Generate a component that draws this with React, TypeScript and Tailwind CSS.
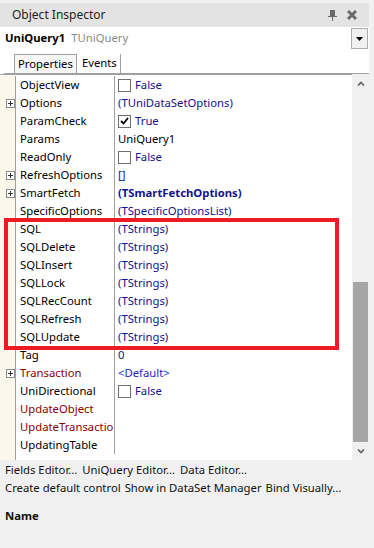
import React from 'react';

type Row = {
  name: string;
  value?: string;
  expand?: boolean;
  check?: boolean;
  checked?: boolean;
  red?: boolean;
  bold?: boolean;
  plain?: boolean;
  bright?: boolean;
};

const ROWS: Row[] = [
  { name: 'ObjectView', value: 'False', check: true },
  { name: 'Options', value: '(TUniDataSetOptions)', expand: true },
  { name: 'ParamCheck', value: 'True', check: true, checked: true },
  { name: 'Params', value: 'UniQuery1', plain: true },
  { name: 'ReadOnly', value: 'False', check: true },
  { name: 'RefreshOptions', value: '[]', expand: true },
  { name: 'SmartFetch', value: '(TSmartFetchOptions)', expand: true, bold: true },
  { name: 'SpecificOptions', value: '(TSpecificOptionsList)' },
  { name: 'SQL', value: '(TStrings)' },
  { name: 'SQLDelete', value: '(TStrings)' },
  { name: 'SQLInsert', value: '(TStrings)' },
  { name: 'SQLLock', value: '(TStrings)' },
  { name: 'SQLRecCount', value: '(TStrings)' },
  { name: 'SQLRefresh', value: '(TStrings)' },
  { name: 'SQLUpdate', value: '(TStrings)' },
  { name: 'Tag', value: '0' },
  { name: 'Transaction', value: '<Default>', expand: true, red: true, bright: true },
  { name: 'UniDirectional', value: 'False', check: true },
  { name: 'UpdateObject', red: true },
  { name: 'UpdateTransaction', red: true },
  { name: 'UpdatingTable' },
];

const PlusBox = () => (
  <div className="w-[9px] h-[9px] border border-[#8c8c8c] bg-white flex items-center justify-center">
    <svg width="5" height="5" viewBox="0 0 5 5">
      <path d="M0 2.5H5M2.5 0V5" stroke="#333" strokeWidth="1" />
    </svg>
  </div>
);

const CheckBox = ({ checked }: { checked?: boolean }) => (
  <div className="w-[13px] h-[13px] border border-[#707070] bg-white flex items-center justify-center mr-[4px]">
    {checked && (
      <svg width="9" height="8" viewBox="0 0 9 8">
        <path d="M1 4L3.5 6.5L8 1" stroke="#000" strokeWidth="1.8" fill="none" />
      </svg>
    )}
  </div>
);

const App: React.FC = () => {
  return (
    <div
      className="w-[374px] h-[548px] bg-[#f0f0f0] relative overflow-hidden text-[11.3px] text-black"
      style={{ fontFamily: '"Noto Sans", "Open Sans", sans-serif' }}
    >
      <div className="pt-[3px]">
        {/* title bar */}
        <div className="h-[24px] bg-[#e3e3e3] mr-[5px] flex items-center pl-[12px] pr-[12px]">
          <span className="flex-1 text-[#1e1e1e] text-[12px]">Object Inspector</span>
          <svg width="9" height="11" viewBox="0 0 9 11" className="mr-[10px]">
            <path d="M2 0H7V6H9V7H5V11H4V7H0V6H2Z" fill="#6a6a6a" />
          </svg>
          <svg width="10" height="10" viewBox="0 0 10 10">
            <path d="M1 1L9 9M9 1L1 9" stroke="#6a6a6a" strokeWidth="3" />
          </svg>
        </div>

        {/* component combo */}
        <div className="h-[23px] bg-white mr-[5px] flex items-center pl-[5px]">
          <span className="font-bold">UniQuery1</span>
          <span className="ml-[6px] text-[#8a8a8a]">TUniQuery</span>
          <div className="ml-auto mr-[1px] w-[17px] h-[21px] border border-[#adadad] bg-[#f0f0f0] flex items-center justify-center">
            <svg width="7" height="4" viewBox="0 0 7 4">
              <path d="M0 0H7L3.5 4Z" fill="#000" />
            </svg>
          </div>
        </div>

        {/* tabs */}
        <div className="h-[24px] bg-white mr-[5px] pl-[4px] flex items-end">
          <div className="flex-1 flex items-end border-b border-[#a0a0a0] h-[21px] relative">
            <div className="ml-[10px] h-[19px] px-[3px] border border-b-0 border-[#a0a0a0] bg-[#f7f7f7] leading-[18px]">Properties</div>
            <div className="h-[19px] pl-[5px] pr-[3px] border-r border-[#a0a0a0] leading-[18px]">Events</div>
          </div>
        </div>

        {/* grid */}
        <div className="flex h-[386px] mr-[5px]">
          <div className="flex-1 flex flex-col bg-white border-t border-[#a0a0a0]">
            <div className="pt-[1px]">
              {ROWS.map((r) => (
                <div key={r.name} className="flex h-[18px]">
                  <div className="w-[16px] bg-[#fbf7ea] border-r border-[#a0a0a0] flex items-center pl-[6px]">
                    {r.expand && <PlusBox />}
                  </div>
                  <div
                    className={`w-[99px] pl-[4px] border-r border-[#a0a0a0] leading-[18px] whitespace-nowrap overflow-hidden ${
                      r.red ? 'text-[#8b0000]' : 'text-black'
                    }`}
                  >
                    {r.name}
                  </div>
                  <div
                    className={`flex-1 pl-[3px] flex items-center whitespace-nowrap ${
                      r.plain ? 'text-black' : r.bright ? 'text-[#2424c8]' : 'text-[#12128a]'
                    } ${r.bold ? 'font-bold' : ''}`}
                  >
                    {r.check && <CheckBox checked={r.checked} />}
                    {r.value}
                  </div>
                </div>
              ))}
            </div>
            <div className="flex-1 flex">
              <div className="w-[16px] bg-[#fbf7ea] border-r border-[#a0a0a0]" />
            </div>
          </div>

          {/* scrollbar */}
          <div className="w-[17px] bg-[#f0f0f0] flex flex-col items-center pt-[1px]">
            <div className="h-[17px] flex items-center justify-center">
              <svg width="8" height="5" viewBox="0 0 8 5">
                <path d="M1 4.5L4 1.5L7 4.5" stroke="#606060" strokeWidth="1.6" fill="none" />
              </svg>
            </div>
            <div className="flex-1 w-full px-[1px] pt-[190px]">
              <div className="w-full h-[160px] bg-[#a6a6a6]" />
            </div>
            <div className="h-[17px] flex items-center justify-center">
              <svg width="8" height="5" viewBox="0 0 8 5">
                <path d="M1 0.5L4 3.5L7 0.5" stroke="#606060" strokeWidth="1.6" fill="none" />
              </svg>
            </div>
          </div>
        </div>

        {/* verbs */}
        <div className="pl-[5px] pt-[1px] leading-[18px] text-[#111]">
          <div className="flex gap-[5px]">
            <span>Fields Editor...</span>
            <span>UniQuery Editor...</span>
            <span>Data Editor...</span>
          </div>
          <div className="flex gap-[4px]">
            <span>Create default control</span>
            <span>Show in DataSet Manager</span>
            <span>Bind Visually...</span>
          </div>
          <div className="font-bold mt-[10px]">Name</div>
        </div>
      </div>

      {/* highlight annotation */}
      <div className="absolute left-[4px] top-[218px] w-[335px] h-[132px] border-[4px] border-[#ed1c24] pointer-events-none" />
    </div>
  );
};

export default App;
